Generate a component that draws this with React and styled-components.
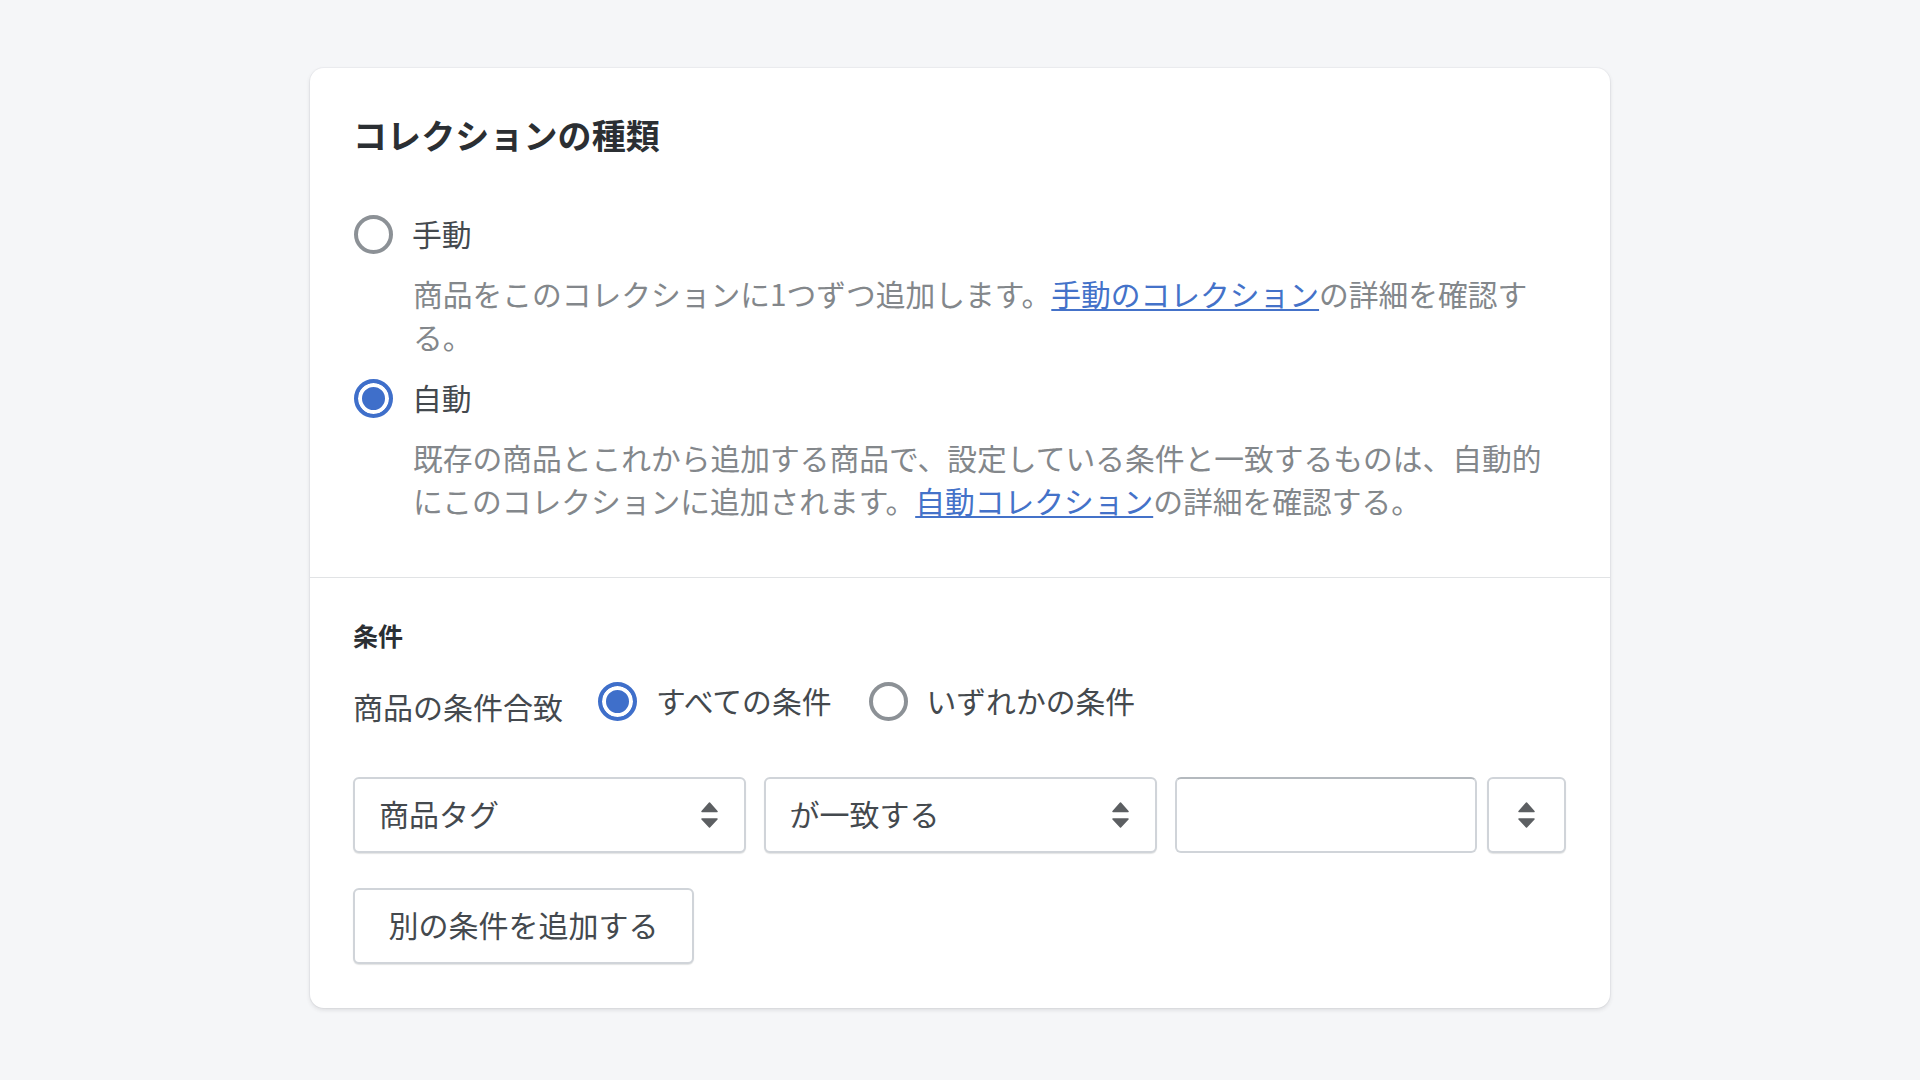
import styled, { createGlobalStyle } from 'styled-components';

const GlobalStyle = createGlobalStyle`
	html, body {
		margin: 0;
		background: #f5f6f8;
	}
	body {
		font-family: "Noto Sans CJK JP", "Liberation Sans", sans-serif;
		color: #44494e;
	}
	* {
		box-sizing: border-box;
	}
`;

const Page = styled.main`
	padding: 68px 0 72px;
`;

const Card = styled.section`
	width: 1300px;
	margin: 0 auto;
	background: #fff;
	border-radius: 14px;
	box-shadow: 0 0 0 1px rgba(63, 63, 68, 0.04), 0 2px 4px rgba(63, 63, 68, 0.14);
`;

const TypeSection = styled.div`
	padding: 45px 44px 55px 43px;
	border-bottom: 1px solid #e1e3e5;
`;

const Title = styled.h2`
	margin: 0 0 55px;
	font-size: 34px;
	line-height: 44px;
	font-weight: 700;
	letter-spacing: 0.1px;
	color: #2b2f33;
`;

const Option = styled.div`
	& + & {
		margin-top: 18px;
	}
`;

const RadioLabel = styled.label`
	display: inline-flex;
	align-items: center;
	gap: 19px;
	font-size: 29.8px;
`;

const RadioText = styled.span`
	line-height: 42px;
	padding-bottom: 2px;
`;

const RadioMark = styled.span`
	flex: none;
	width: 39px;
	height: 39px;
	margin-left: 1px;
	border-radius: 50%;
	border: 4px solid ${(p) => (p.$checked ? '#3f6fca' : '#8c9196')};
	background: ${(p) => (p.$checked ? '#3f6fca' : '#fff')};
	box-shadow: ${(p) => (p.$checked ? 'inset 0 0 0 4px #fff' : 'none')};
`;

const Description = styled.p`
	margin: 13.5px 0 0;
	padding-left: 60px;
	font-size: 29.75px;
	line-height: 43px;
	color: #83878b;
`;

const Link = styled.a`
	color: #4472c9;
	text-decoration: underline;
	text-underline-offset: 3px;
`;

const ConditionSection = styled.div`
	padding: 40px 44px 44px 43px;
`;

const SubTitle = styled.h3`
	margin: 0 0 27px;
	font-size: 25px;
	line-height: 34px;
	font-weight: 700;
	color: #2b2f33;
`;

const MatchRow = styled.div`
	display: flex;
	align-items: flex-start;
	margin-bottom: 49px;
`;

const MatchLabel = styled.span`
	width: 244px;
	padding-top: 5px;
	font-size: 30px;
	line-height: 44px;
`;

const MatchOptions = styled.div`
	display: flex;
	gap: 36px;
`;

const RuleRow = styled.div`
	display: flex;
	gap: 18px;
	margin-bottom: 35px;
`;

const InputGroup = styled.div`
	display: flex;
	gap: 10px;
`;

const Select = styled.div`
	display: flex;
	align-items: center;
	justify-content: space-between;
	width: ${(p) => p.$width}px;
	height: 76px;
	padding: 0 26px 0 24px;
	background: #fff;
	border: 2px solid #d0d4d9;
	border-radius: 6px;
	box-shadow: 0 1px 1px rgba(22, 29, 37, 0.12);
	font-size: 30px;
`;

const SelectValue = styled.span`
	padding-bottom: 5px;
`;

const IconSelect = styled(Select)`
	justify-content: center;
	padding: 0;
`;

const TextInput = styled.input`
	width: 302px;
	height: 76px;
	background: #fff;
	border: 2px solid #d0d4d9;
	border-top-color: #b4b9be;
	border-radius: 6px;
	outline: none;
`;

const AddButton = styled.button`
	display: block;
	width: 341px;
	height: 76px;
	padding: 0 0 5px;
	background: #fff;
	border: 2px solid #d0d4d9;
	border-radius: 6px;
	box-shadow: 0 1px 1px rgba(22, 29, 37, 0.12);
	font-family: inherit;
	font-size: 30px;
	color: inherit;
`;

const Arrows = () => (
	<svg width="17" height="26" viewBox="0 0 17 26" fill="#5c5f62" stroke="#5c5f62" strokeWidth="1.5" strokeLinejoin="round">
		<path d="M8.5 1 L16 9.5 H1 Z" />
		<path d="M1 17 H16 L8.5 25 Z" />
	</svg>
);

const Radio = ({ checked, children }) => (
	<RadioLabel>
		<RadioMark $checked={checked} />
		<RadioText>{children}</RadioText>
	</RadioLabel>
);

export default function App() {
	return (
		<>
			<GlobalStyle />
			<Page>
				<Card>
					<TypeSection>
						<Title>コレクションの種類</Title>
						<Option>
							<Radio>手動</Radio>
							<Description>
								商品をこのコレクションに1つずつ追加します。<Link href="#">手動のコレクション</Link>の詳細を確認する。
							</Description>
						</Option>
						<Option>
							<Radio checked>自動</Radio>
							<Description>
								既存の商品とこれから追加する商品で、設定している条件と一致するものは、自動的にこのコレクションに追加されます。<Link href="#">自動コレクション</Link>の詳細を確認する。
							</Description>
						</Option>
					</TypeSection>
					<ConditionSection>
						<SubTitle>条件</SubTitle>
						<MatchRow>
							<MatchLabel>商品の条件合致</MatchLabel>
							<MatchOptions>
								<Radio checked>すべての条件</Radio>
								<Radio>いずれかの条件</Radio>
							</MatchOptions>
						</MatchRow>
						<RuleRow>
							<Select $width={393}><SelectValue>商品タグ</SelectValue><Arrows /></Select>
							<Select $width={394}><SelectValue>が一致する</SelectValue><Arrows /></Select>
							<InputGroup>
								<TextInput />
								<IconSelect $width={79}><Arrows /></IconSelect>
							</InputGroup>
						</RuleRow>
						<AddButton>別の条件を追加する</AddButton>
					</ConditionSection>
				</Card>
			</Page>
		</>
	);
}
